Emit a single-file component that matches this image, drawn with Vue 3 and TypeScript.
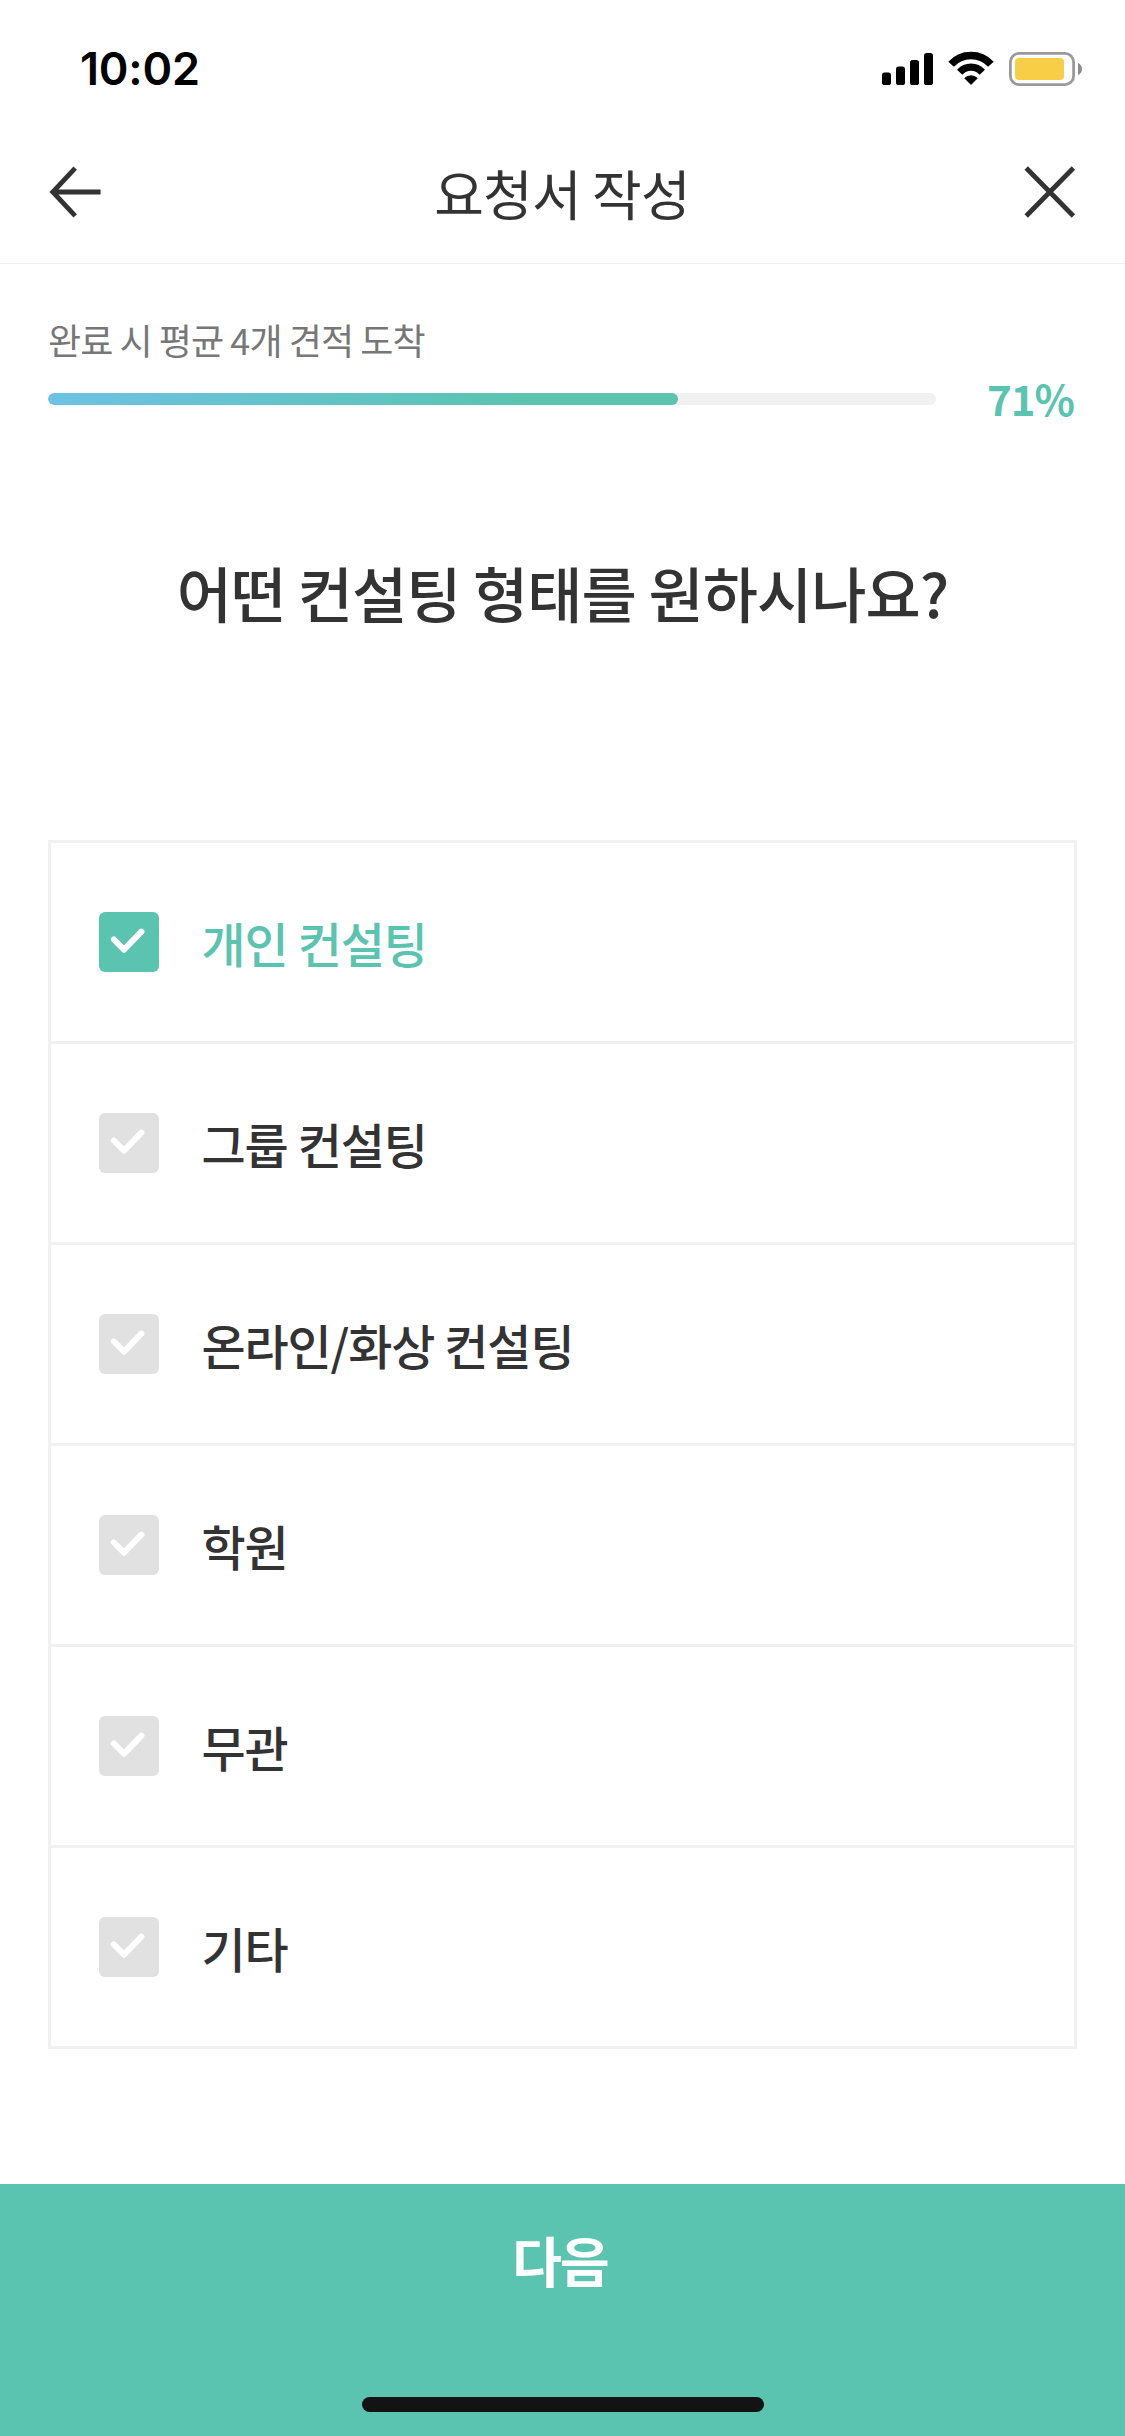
<script setup lang="ts">
import { computed, ref } from 'vue'

interface Option {
  label: string
  checked: boolean
}

const progress = ref(71)
const progressWidth = computed(() => `${progress.value}%`)

const options = ref<Option[]>([
  { label: '개인 컨설팅', checked: true },
  { label: '그룹 컨설팅', checked: false },
  { label: '온라인/화상 컨설팅', checked: false },
  { label: '학원', checked: false },
  { label: '무관', checked: false },
  { label: '기타', checked: false },
])
</script>

<template>
  <div class="screen">
    <div class="status">
      <span class="time">10:02</span>
      <svg class="indicators" width="202" height="36" viewBox="0 0 202 36">
        <rect x="0" y="21.6" width="9" height="12.4" rx="2.6" />
        <rect x="14" y="15.6" width="9" height="18.4" rx="2.6" />
        <rect x="28" y="9" width="9" height="25" rx="2.6" />
        <rect x="42" y="2" width="9" height="32" rx="2.6" />
        <g fill="none" stroke="#000">
          <path d="M69.1 13.3a27 27 0 0 1 39.8 0" stroke-width="7.6" />
          <path d="M77.7 21.2a15.3 15.3 0 0 1 22.6 0" stroke-width="7.2" />
        </g>
        <path d="M82.8 27.2a9.4 9.4 0 0 1 12.4 0L89 33.4z" stroke="#000" stroke-width="1" stroke-linejoin="round" />
        <rect x="128.4" y="2.4" width="63.2" height="31.2" rx="8.6" fill="none" stroke="#9a9a9a" stroke-width="2.8" />
        <rect x="133" y="7" width="49" height="22" rx="4" fill="#f7ce46" />
        <path d="M196 12c2.600 1 4 3.400 4 6s-1.400 5-4 6z" fill="#8c8c8c" />
      </svg>
    </div>

    <header class="header">
      <svg class="nav-icon" width="54" height="54" viewBox="0 0 54 54">
        <path d="M27.200 3.200L4.800 27l22.400 23.800M4.800 27h47.800" />
      </svg>
      <h1 class="title">요청서 작성</h1>
      <svg class="nav-icon" width="54" height="54" viewBox="0 0 54 54">
        <path d="M3.200 3L50.400 51M50.400 3L3.200 51" />
      </svg>
    </header>

    <section class="progress">
      <p class="progress-label">완료 시 평균 4개 견적 도착</p>
      <div class="progress-row">
        <div class="track">
          <div class="fill" :style="{ width: progressWidth }"></div>
        </div>
        <span class="percent">{{ progress }}%</span>
      </div>
    </section>

    <h2 class="question">어떤 컨설팅 형태를 원하시나요?</h2>

    <ul class="options">
      <li
        v-for="option in options"
        :key="option.label"
        class="option"
        :class="{ checked: option.checked }"
        @click="option.checked = !option.checked"
      >
        <span class="box">
          <svg width="60" height="60" viewBox="0 0 60 60">
            <path d="M14.900 27.500L25 37.700L42.400 19.700" />
          </svg>
        </span>
        <span class="label">{{ option.label }}</span>
      </li>
    </ul>

    <footer class="footer">
      <button class="next" type="button">다음</button>
      <div class="home-bar"></div>
    </footer>
  </div>
</template>

<style>
body {
  margin: 0;
  background: #fff;
}
</style>

<style scoped>
.screen {
  display: flex;
  flex-direction: column;
  width: 1125px;
  height: 2436px;
  overflow: hidden;
  background: #fff;
  color: #333;
  font-family: 'Noto Sans CJK KR', sans-serif;
}

.status {
  display: flex;
  flex: none;
  align-items: flex-start;
  justify-content: space-between;
  box-sizing: border-box;
  height: 121px;
  padding: 51px 41px 0 80px;
}

.time {
  color: #000;
  font-family: Inter, sans-serif;
  font-size: 45px;
  font-weight: 600;
  line-height: 36px;
  letter-spacing: -0.2px;
}

.indicators {
  display: block;
}

.header {
  display: flex;
  flex: none;
  align-items: center;
  justify-content: space-between;
  box-sizing: border-box;
  height: 143px;
  padding: 0 48px;
  border-bottom: 1px solid #f0f0f0;
}

.nav-icon {
  display: block;
  fill: none;
  stroke: #333;
  stroke-width: 4.8;
}

.title {
  margin: 2px 1px 0 0;
  font-size: 54px;
  font-weight: 400;
  line-height: 78px;
  letter-spacing: -0.8px;
}

.progress {
  flex: none;
  padding: 49px 48px 0;
}

.progress-label {
  margin: 0;
  color: #777;
  font-size: 36px;
  line-height: 53px;
  letter-spacing: -0.93px;
}

.progress-row {
  display: flex;
  align-items: center;
  justify-content: space-between;
  height: 66px;
}

.track {
  width: 888px;
  height: 12px;
  overflow: hidden;
  border-radius: 6px;
  background: #f1f1f1;
}

.fill {
  height: 100%;
  border-radius: 6px;
  background: linear-gradient(100deg, #6dc2e4 0%, #5bc4b0 75%);
}

.percent {
  margin: -3px 3px 0 0;
  color: #5bc4b0;
  font-size: 42px;
  font-weight: 700;
  line-height: 60px;
  letter-spacing: -1px;
}

.question {
  flex: none;
  margin: 116px 0 0;
  font-size: 60px;
  font-weight: 500;
  line-height: 88px;
  letter-spacing: -0.95px;
  text-align: center;
}

.options {
  flex: none;
  margin: 204px 48px 0;
  padding: 0;
  border: 3px solid #f1f1f1;
  border-bottom: 0;
  list-style: none;
}

.option {
  display: flex;
  align-items: center;
  gap: 42.6px;
  height: 198px;
  padding-left: 48px;
  border-bottom: 3px solid #f1f1f1;
  font-size: 48px;
  font-weight: 500;
  letter-spacing: -1.15px;
  word-spacing: 0.5px;
}

.box {
  width: 60px;
  height: 60px;
  border-radius: 6px;
  background: #e1e1e1;
}

.box svg {
  display: block;
  fill: none;
  stroke: #fff;
  stroke-width: 6;
  stroke-linecap: round;
  stroke-linejoin: round;
}

.checked {
  color: #5bc4b0;
}

.checked .box {
  background: #5bc4b0;
}

.footer {
  display: flex;
  flex-direction: column;
  align-items: center;
  justify-content: space-between;
  box-sizing: border-box;
  height: 252px;
  margin-top: auto;
  padding-bottom: 24px;
  background: #5bc4b0;
}

.next {
  width: 100%;
  height: 150px;
  padding: 0 5px 0 0;
  border: 0;
  background: none;
  color: #fff;
  font: inherit;
  font-size: 54px;
  font-weight: 700;
  letter-spacing: -2px;
}

.home-bar {
  width: 402px;
  height: 15px;
  border-radius: 8px;
  background: #131313;
}
</style>
